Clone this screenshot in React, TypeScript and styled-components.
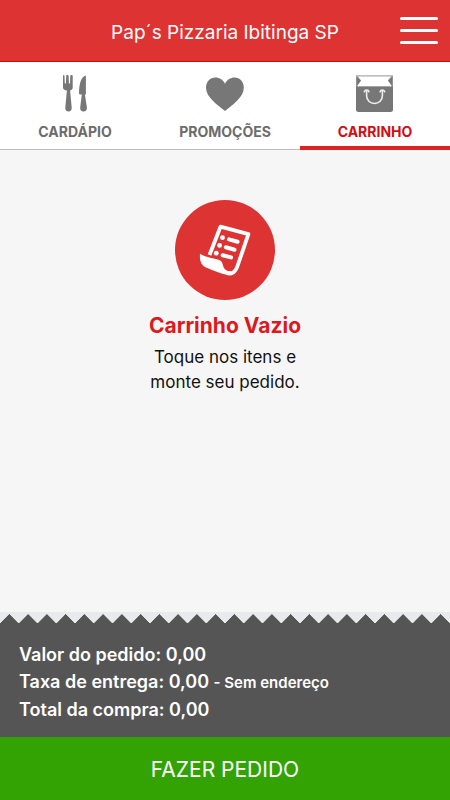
import React from "react";
import styled, { createGlobalStyle } from "styled-components";

const GlobalStyle = createGlobalStyle`
  * { box-sizing: border-box; }
  body {
    margin: 0;
    background: #f6f6f6;
    color: #111;
    font-family: Inter, "Liberation Sans", sans-serif;
  }
`;

const Page = styled.div`
  min-height: 100vh;
  display: flex;
  flex-direction: column;
`;

const Header = styled.header`
  display: grid;
  grid-template-columns: 50px 1fr 50px;
  align-items: center;
  height: 62px;
  background: #dd3333;
  border-bottom: 1px solid #d40d12;
`;

const Title = styled.h1`
  grid-column: 2;
  margin: 0;
  padding-top: 4px;
  color: #fff;
  font-size: 19px;
  line-height: 24px;
  font-weight: 400;
  text-align: center;
  white-space: nowrap;
`;

const MenuButton = styled.button`
  display: flex;
  flex-direction: column;
  gap: 9px;
  width: 38px;
  padding: 0;
  border: 0;
  background: none;
  cursor: pointer;
`;

const MenuBar = styled.span`
  height: 3px;
  border-radius: 2px;
  background: #fff;
`;

const Tabs = styled.nav`
  display: grid;
  grid-template-columns: repeat(3, 1fr);
  height: 88px;
  background: #fff;
`;

const Tab = styled.a<{ $active?: boolean }>`
  display: flex;
  flex-direction: column;
  align-items: center;
  gap: 9px;
  padding-top: 12px;
  border-bottom: ${(p) => (p.$active ? "4px solid #dd2222" : "1px solid #bbb")};
  color: ${(p) => (p.$active ? "#d40d12" : "#6c6c6c")};
  font-size: 14px;
  line-height: 18px;
  font-weight: 700;
  text-decoration: none;
`;

const Main = styled.main`
  flex: 1;
  display: flex;
  flex-direction: column;
  align-items: center;
  padding-top: 50px;
  text-align: center;
`;

const Badge = styled.div`
  display: flex;
  width: 100px;
  height: 100px;
  border-radius: 50%;
  background: #dd3333;
`;

const EmptyTitle = styled.h2`
  margin: 12px 0 5px;
  color: #dc1a1d;
  font-size: 21px;
  line-height: 28px;
  font-weight: 700;
`;

const EmptyText = styled.p`
  margin: 0;
  font-size: 17px;
  line-height: 25px;
`;

const TornEdge = styled.div`
  height: 12px;
  background-color: #e9eaee;
  background-image: conic-gradient(from 135deg at 50% 0, #555 90deg, transparent 0);
  background-size: 19px 10px;
  background-repeat: round no-repeat;
  background-position: left bottom;
`;

const Summary = styled.section`
  padding: 17px 19px 14px;
  background: #555;
  color: #fff;
  font-size: 18px;
  line-height: 27px;
  font-weight: 600;
`;

const Line = styled.div``;

const Note = styled.small`
  font-size: 15px;
`;

const OrderButton = styled.button`
  height: 63px;
  padding: 2px 0 0;
  border: 0;
  background: #33a303;
  color: #fff;
  font-family: inherit;
  font-size: 21px;
  line-height: 28px;
  cursor: pointer;
`;

const CutleryIcon = () => (
  <svg width="40" height="40" viewBox="0 0 40 40" fill="#777" aria-hidden="true">
    <path d="M8 2c0-1.400 1.500-1.400 1.500 0l.3 7.500h1.100L11.200 2c0-1.400 2.400-1.400 2.400 0l.3 7.500H15L15.300 2c0-1.400 2.400-1.400 2.400 0v11.500c0 1.700-1 2.600-2.600 3l1.600 17c.2 2.400-1 4-3.100 4s-3.500-1.600-3.300-4l1.600-17C9.500 16.200 8 15.200 8 13.500z" />
    <path d="M30.900 1.400v19.100h-1l2 13c.2 2.400-1.200 4-3.400 4s-3.600-1.600-3.300-4l1.600-13h-1.600c-1.200 0-1.300-1-1.200-2.200C24.300 10 25.800 2.500 30.900 1.400z" />
  </svg>
);

const HeartIcon = () => (
  <svg width="40" height="40" viewBox="0 0 40 40" fill="#777" aria-hidden="true">
    <path d="M20 37C13 31 1 23.500 1 13.700 1 7.500 5.300 3.500 10.500 3.500c4 0 7.500 2.200 9.500 6.300 2-4.100 5.500-6.300 9.500-6.300 5.200 0 9.300 4 9.300 10.200C38.800 23.500 27 31 20 37z" />
  </svg>
);

const BagIcon = () => (
  <svg width="40" height="40" viewBox="0 0 40 40" fill="none" aria-hidden="true">
    <path d="M1 12h37v23.500c0 1.600-.8 2.500-2.400 2.500H3.400C1.800 38 1 37.100 1 35.500z" fill="#777" />
    <path d="M1 1.300h37v11H1z" fill="#aaa" />
    <path d="M3 2.600h33l-3 4 3 5.600H3l3-5.600z" fill="#fff" />
    <path d="M1.500 2.500 6 6.600l-4.500 5.600zM37.500 2.500 33 6.600l4.500 5.600z" fill="#777" />
    <path d="M3 12.200 6.400 8M36 12.200 32.600 8" stroke="#fff" strokeWidth="1.500" />
    <path d="M9.300 17.700c.8-2.200 4-2.200 4.600 0M25.100 17.700c.6-2.200 3.800-2.200 4.600 0M11.600 16.500v5c0 4.800 3.400 8 7.900 8s7.900-3.200 7.900-8v-5" stroke="#eee" strokeWidth="1.600" strokeLinecap="round" />
  </svg>
);

const ReceiptIcon = () => (
  <svg width="100" height="100" viewBox="0 0 100 100" fill="none" aria-hidden="true">
    <path d="M34.500 55 45.500 26.700 73.400 34.200 62.500 66c-2.100 6.400-6 8.700-11 7" stroke="#fff" strokeWidth="3.800" strokeLinejoin="round" />
    <path d="M25 53.800c6.500 4 13.500 4.200 19.200 6.200 4.500 1.500 2.800 6.500 6 9.500 1.700 1.600 4 1.900 6 1.600l-2.500 4c-8-1-15-4.500-22-7.300-5.500-2.200-7.300-7.200-6.700-14z" fill="#fff" />
    <path d="m54 39.400 8.600 2.300M50.800 47.300l8.700 2.400M47.600 55.200l8.400 2.200" stroke="#fff" strokeWidth="4" strokeLinecap="round" />
    <g fill="#fff">
      <circle cx="47.500" cy="37.700" r="2.400" />
      <circle cx="44.600" cy="45.400" r="2.400" />
      <circle cx="41.300" cy="53.200" r="2.400" />
    </g>
  </svg>
);

export default function App() {
  return (
    <>
      <GlobalStyle />
      <Page>
        <Header>
          <Title>Pap´s Pizzaria Ibitinga SP</Title>
          <MenuButton type="button" aria-label="Menu">
            <MenuBar />
            <MenuBar />
            <MenuBar />
          </MenuButton>
        </Header>
        <Tabs>
          <Tab href="#cardapio"><CutleryIcon />CARDÁPIO</Tab>
          <Tab href="#promocoes"><HeartIcon />PROMOÇÕES</Tab>
          <Tab href="#carrinho" $active aria-current="page"><BagIcon />CARRINHO</Tab>
        </Tabs>
        <Main>
          <Badge><ReceiptIcon /></Badge>
          <EmptyTitle>Carrinho Vazio</EmptyTitle>
          <EmptyText>Toque nos itens e<br />monte seu pedido.</EmptyText>
        </Main>
        <TornEdge />
        <Summary>
          <Line>Valor do pedido: 0,00</Line>
          <Line>Taxa de entrega: 0,00 <Note>- Sem endereço</Note></Line>
          <Line>Total da compra: 0,00</Line>
        </Summary>
        <OrderButton type="button">FAZER PEDIDO</OrderButton>
      </Page>
    </>
  );
}
